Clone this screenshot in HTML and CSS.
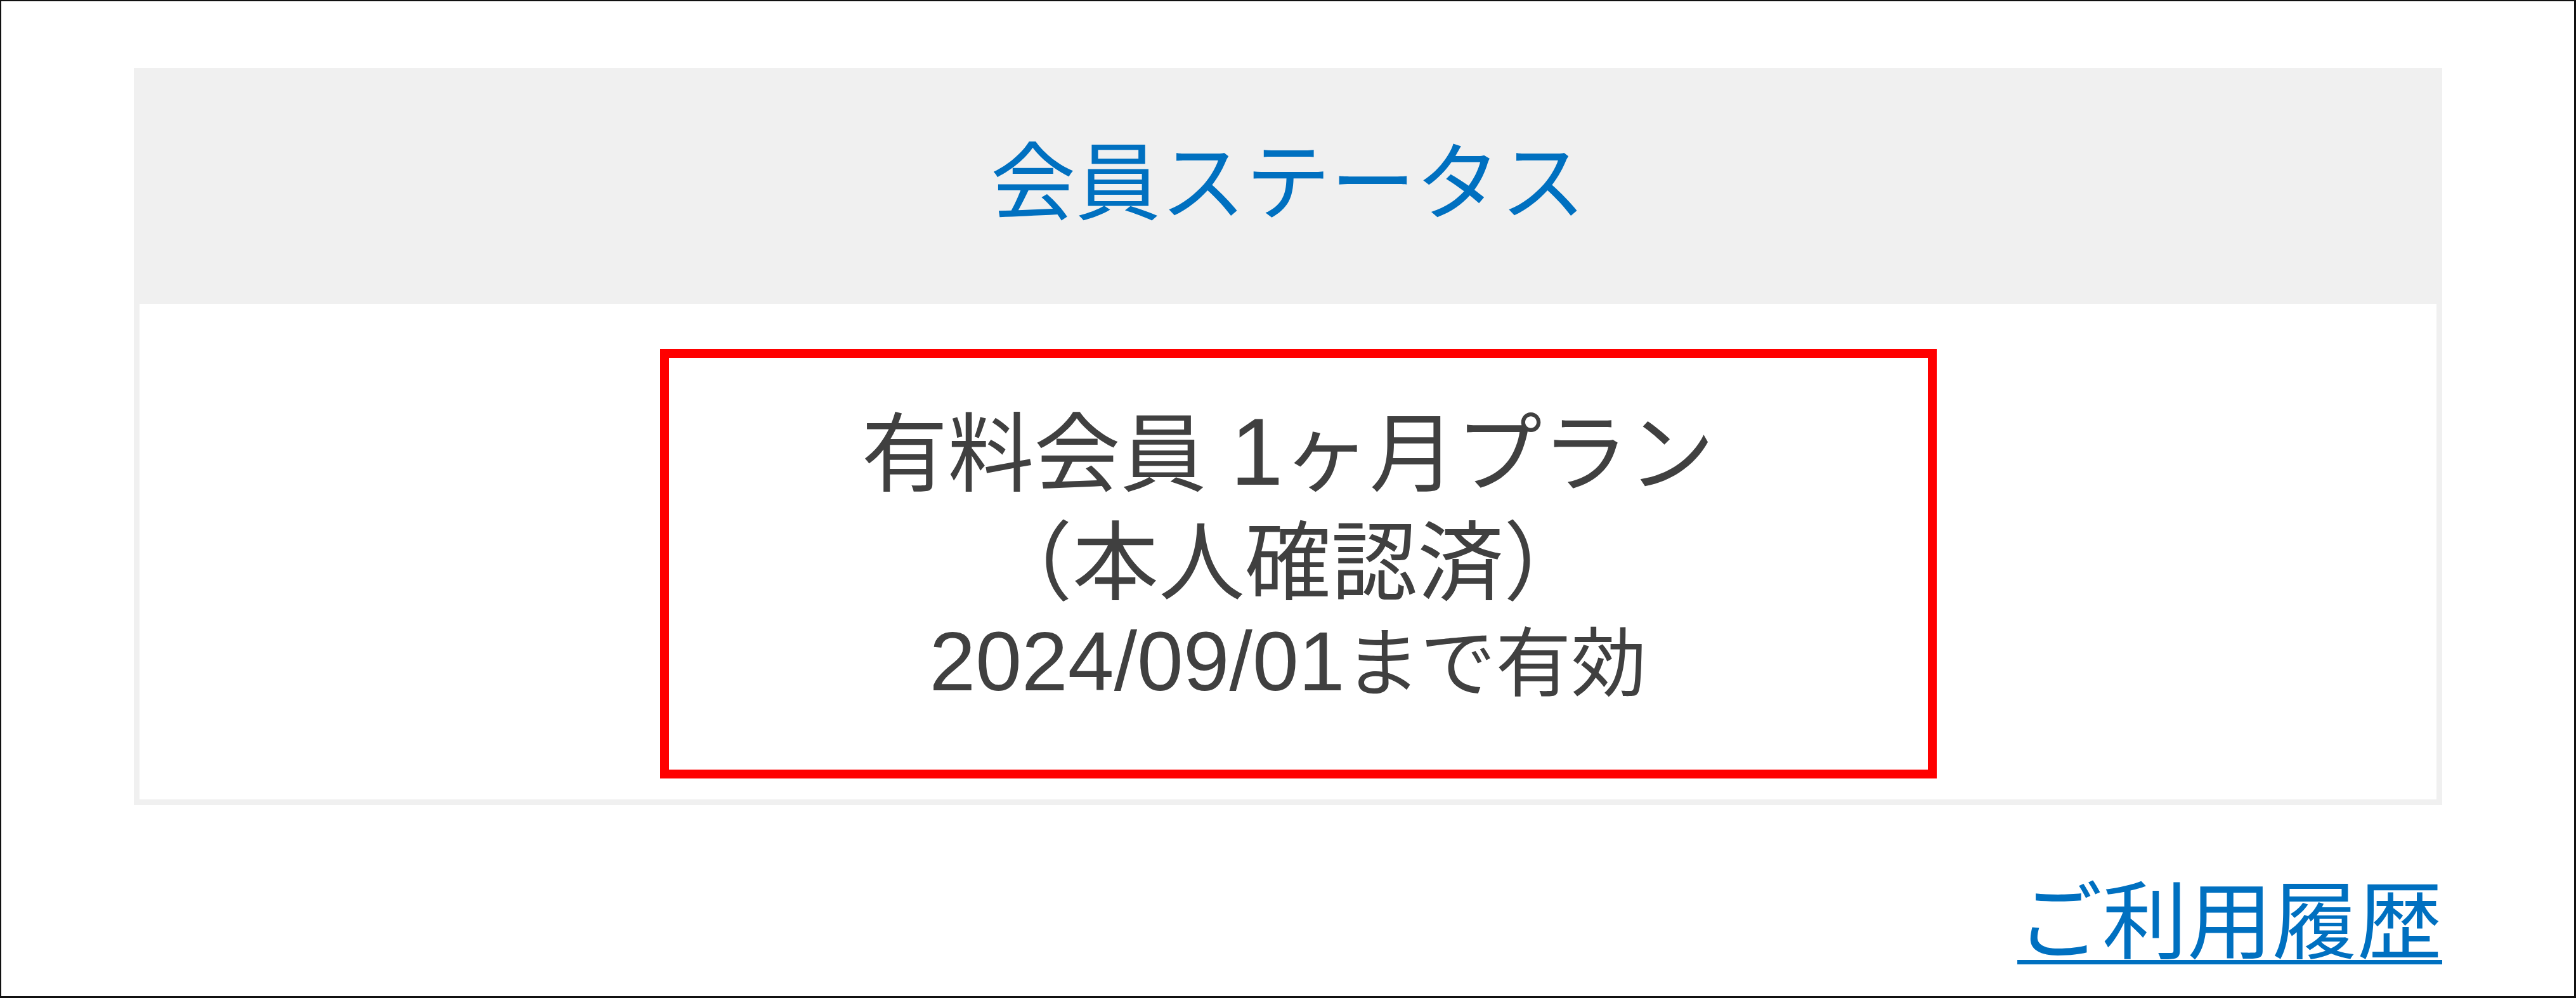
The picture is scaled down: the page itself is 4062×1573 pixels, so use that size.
FILE: index.html
```html
<!DOCTYPE html>
<html lang="ja">
<head>
<meta charset="utf-8">
<title>会員ステータス</title>
<link rel="stylesheet" href="styles.css">
</head>
<body>
  <div class="frame">
    <section class="status">
      <h2 class="status-head">会員ステータス</h2>
      <div class="status-body">
        <div class="highlight">
          <p class="plan">有料会員 <span class="num">1</span>ヶ月プラン<br>（本人確認済）</p>
          <p class="expiry"><span class="num">2024/09/01</span>まで有効</p>
        </div>
      </div>
    </section>
    <div class="links">
      <a href="#" class="history">ご利用履歴</a>
    </div>
  </div>
</body>
</html>
```

FILE: styles.css
```css
html, body {
  margin: 0;
  padding: 0;
  background: #ffffff;
}

body {
  font-family: "Liberation Sans", "Noto Sans CJK JP", sans-serif;
  color: #404040;
}

.frame {
  box-sizing: border-box;
  width: 4062px;
  height: 1573px;
  border-style: solid;
  border-color: #111111;
  border-width: 2px 3px 3px 2px;
  padding: 105px 208px 0 209px;
  overflow: hidden;
}

.status {
  display: flex;
  flex-direction: column;
}

.status-head {
  margin: 0;
  height: 372px;
  box-sizing: border-box;
  padding-bottom: 6px;
  background: #f0f0f0;
  display: flex;
  align-items: center;
  justify-content: center;
  font-size: 134px;
  line-height: 1.2;
  font-weight: 400;
  color: #0070c0;
}

.status-body {
  border: 9px solid #f0f0f0;
  border-top: 0;
  padding: 71px 0 33px;
  display: flex;
  justify-content: center;
}

.highlight {
  box-sizing: border-box;
  width: 2013px;
  margin-left: 33px;
  border: 14px solid #ff0000;
  padding: 68px 33px 93px 0;
  text-align: center;
}

.plan {
  margin: 0;
  font-size: 136px;
  line-height: 171px;
}

.expiry {
  margin: 0;
  font-size: 119px;
  line-height: 146px;
}

.num {
  font-size: 1.1em;
  line-height: 1;
}

.links {
  display: flex;
  justify-content: flex-end;
  padding-top: 106px;
}

.history {
  font-size: 134px;
  line-height: 1.2;
  color: #0070c0;
  text-decoration: underline;
  text-decoration-thickness: 7px;
  text-underline-offset: 12px;
}
```
